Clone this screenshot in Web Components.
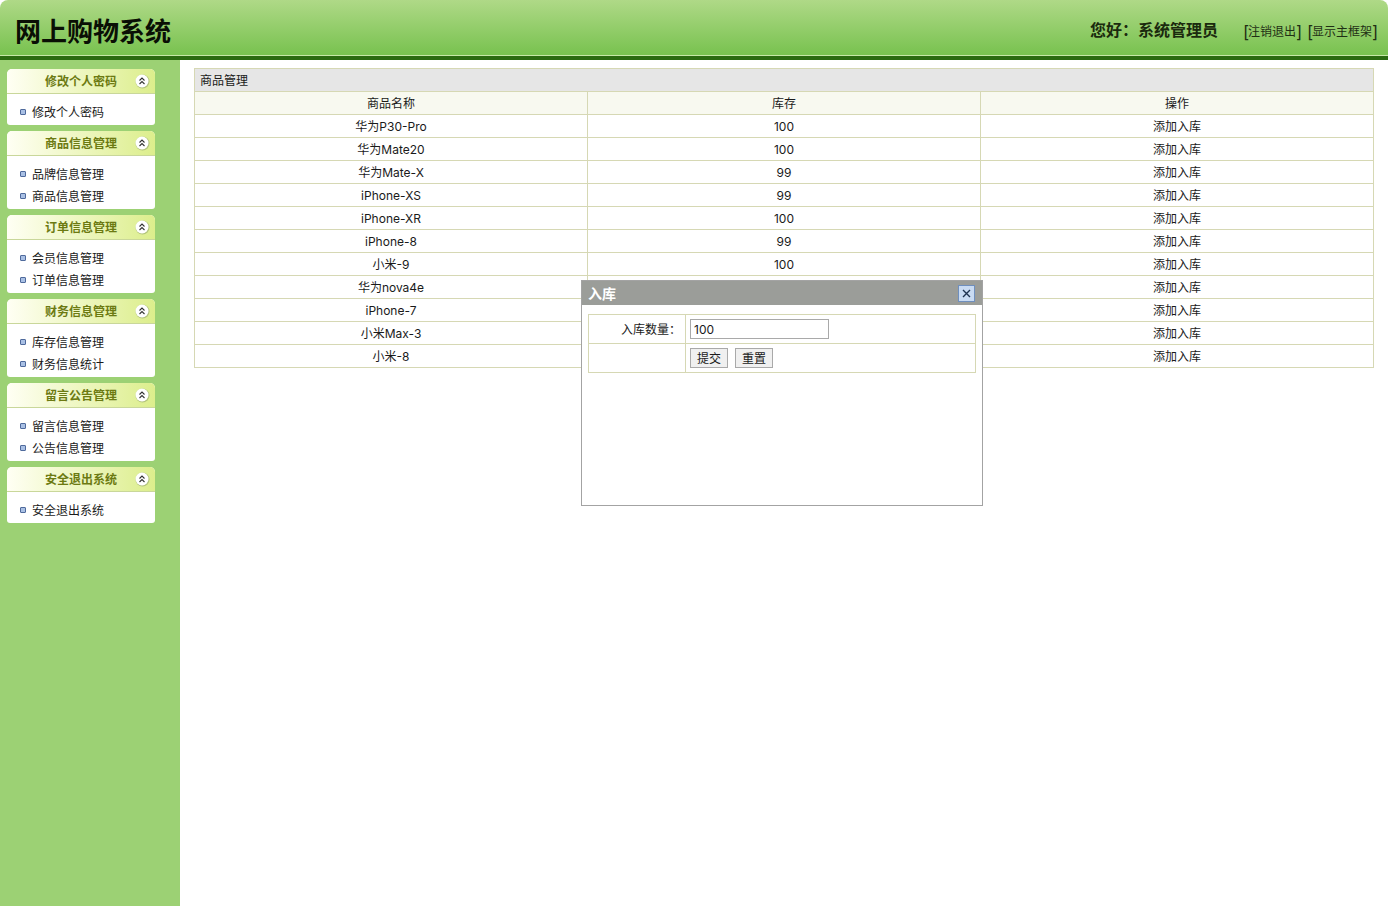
<!DOCTYPE html>
<html lang="zh">
<head>
<meta charset="utf-8">
<title>网上购物系统</title>
<style>
  html, body { margin: 0; height: 100%; }
  body {
    font: 12px/16px Inter, "Noto Sans CJK SC", sans-serif;
    color: #1a1a1a;
    background: #fff;
    overflow: hidden;
  }
  .page { display: flex; flex-direction: column; height: 906px; position: relative; }
  .main { display: flex; flex: 1; min-height: 0; }
</style>
</head>
<body>
<div class="page">
  <app-header></app-header>
  <div class="main">
    <side-bar>
      <side-panel title="修改个人密码"><side-link>修改个人密码</side-link></side-panel>
      <side-panel title="商品信息管理"><side-link>品牌信息管理</side-link><side-link>商品信息管理</side-link></side-panel>
      <side-panel title="订单信息管理"><side-link>会员信息管理</side-link><side-link>订单信息管理</side-link></side-panel>
      <side-panel title="财务信息管理"><side-link>库存信息管理</side-link><side-link>财务信息统计</side-link></side-panel>
      <side-panel title="留言公告管理"><side-link>留言信息管理</side-link><side-link>公告信息管理</side-link></side-panel>
      <side-panel title="安全退出系统"><side-link>安全退出系统</side-link></side-panel>
    </side-bar>
    <goods-table></goods-table>
  </div>
  <stock-dialog></stock-dialog>
</div>

<script>
// 顶部标题栏
class AppHeader extends HTMLElement {
  constructor() {
    super();
    this.attachShadow({ mode: 'open' });
    this.shadowRoot.innerHTML = `
      <style>
        :host {
          display: flex;
          align-items: center;
          height: 55px;
          flex: none;
          padding: 0 11px 0 15px;
          background: linear-gradient(#afd987, #78c24f);
          border-bottom: 1px solid #c5e8a6;
          border-radius: 8px 8px 0 0;
          position: relative;
        }
        :host::after {
          content: "";
          position: absolute;
          left: 0; right: 0; top: 56px;
          height: 4px;
          background: #2a6a10;
        }
        h1 { margin: 9px 0 0; font-size: 26px; line-height: 30px; font-weight: 700; color: #0a0f05; flex: 1; }
        .hello { font-size: 16px; line-height: 24px; font-weight: 700; color: #1b2a0e; margin: 4px 25px 0 0; }
        .links { display: flex; gap: 6px; margin-top: 8px; font-size: 12px; color: #1f2f14; }
        .links b { display: block; width: 5px; text-align: center; font-weight: 400; font-size: 17px; line-height: 18px; }
        .links span { display: flex; align-items: center; }
      </style>
      <h1>网上购物系统</h1>
      <div class="hello">您好：系统管理员</div>
      <div class="links">
        <span><b>[</b>注销退出<b>]</b></span>
        <span><b>[</b>显示主框架<b>]</b></span>
      </div>
    `;
  }
}

// 左侧菜单
class SideBar extends HTMLElement {
  constructor() {
    super();
    this.attachShadow({ mode: 'open' });
    this.shadowRoot.innerHTML = `
      <style>
        :host {
          display: flex;
          flex-direction: column;
          gap: 6px;
          flex: none;
          width: 180px;
          box-sizing: border-box;
          padding: 9px 25px 0 7px;
          margin-top: 4px;
          background: #9cd174;
        }
      </style>
      <slot></slot>
    `;
  }
}

class SidePanel extends HTMLElement {
  constructor() {
    super();
    this.attachShadow({ mode: 'open' });
    this.shadowRoot.innerHTML = `
      <style>
        :host { display: block; background: #fff; border-radius: 5px 5px 3px 3px; overflow: hidden; }
        .head {
          position: relative;
          height: 24px;
          line-height: 26px;
          border-bottom: 1px solid #c9d79a;
          text-align: center;
          font-weight: 700;
          font-size: 12px;
          color: #6c7a12;
          background: linear-gradient(90deg, #fffff4, #dcee8c);
        }
        svg { position: absolute; right: 5px; top: 4px; }
        .body { padding: 7px 0 2px; }
      </style>
      <div class="head">
        <span id="title"></span>
        <svg width="16" height="16" viewBox="0 0 16 16">
          <circle cx="8.5" cy="8.5" r="7" fill="#8fa36a" opacity=".55"/>
          <circle cx="8" cy="8" r="6.5" fill="#fff"/>
          <path d="M5.5 7.5 8 5l2.5 2.5M5.5 11 8 8.5l2.5 2.5" fill="none" stroke="#333" stroke-width="1.1"/>
        </svg>
      </div>
      <div class="body"><slot></slot></div>
    `;
  }
  connectedCallback() {
    this.shadowRoot.getElementById('title').textContent = this.getAttribute('title');
    this.removeAttribute('title');
  }
}

class SideLink extends HTMLElement {
  constructor() {
    super();
    this.attachShadow({ mode: 'open' });
    this.shadowRoot.innerHTML = `
      <style>
        :host {
          display: flex;
          align-items: center;
          height: 22px;
          padding-left: 13px;
          font-size: 12px;
        }
        i {
          width: 4px; height: 4px;
          margin-right: 6px;
          border: 1px solid #4f6a9c;
          border-radius: 1px;
          background: #a9c0e4;
        }
        span { padding-top: 2px; }
      </style>
      <i></i><span><slot></slot></span>
    `;
  }
}

// 商品列表
const GOODS = [
  ['华为P30-Pro', 100], ['华为Mate20', 100], ['华为Mate-X', 99], ['iPhone-XS', 99],
  ['iPhone-XR', 100], ['iPhone-8', 99], ['小米-9', 100], ['华为nova4e', 100],
  ['iPhone-7', 100], ['小米Max-3', 100], ['小米-8', 100]
];

class GoodsTable extends HTMLElement {
  constructor() {
    super();
    this.attachShadow({ mode: 'open' });
    this.shadowRoot.innerHTML = `
      <style>
        :host { display: block; flex: 1; min-width: 0; padding: 12px 14px 0; }
        table { width: 100%; border-collapse: collapse; table-layout: fixed; font-size: 12px; }
        td, th { height: 20px; padding: 2px 0 0; border: 1px solid #d6d8b4; text-align: center; font-weight: 400; }
        .title { text-align: left; padding-left: 5px; background: #e6e6e6; }
        th { background: #f8f9f0; }
      </style>
      <table>
        <tr><td class="title" colspan="3">商品管理</td></tr>
        <tr><th>商品名称</th><th>库存</th><th>操作</th></tr>
        ${GOODS.map(g => `<tr><td>${g[0]}</td><td>${g[1]}</td><td>添加入库</td></tr>`).join('')}
      </table>
    `;
  }
}

// 入库弹窗，盖在表格上面
class StockDialog extends HTMLElement {
  constructor() {
    super();
    this.attachShadow({ mode: 'open' });
    this.shadowRoot.innerHTML = `
      <style>
        :host {
          position: absolute;
          left: 581px; top: 280px;
          width: 402px; height: 226px;
          box-sizing: border-box;
          border: 1px solid #a3a3a3;
          background: #fff;
          font-size: 12px;
        }
        .bar {
          display: flex;
          align-items: center;
          justify-content: space-between;
          height: 24px;
          padding: 0 7px 0 6px;
          background: #9b9d99;
          color: #fff;
          font-weight: 700;
          font-size: 14px;
        }
        .bar > span:first-child { padding-top: 2px; }
        .close {
          width: 15px; height: 15px;
          border: 1px solid #6f8fbe;
          background: #c9dbf3;
          display: flex; align-items: center; justify-content: center;
        }
        form { padding: 9px 6px 0; }
        table { width: 100%; border-collapse: collapse; table-layout: fixed; }
        td { height: 28px; padding: 0 4px; border: 1px solid #d6d8b4; }
        td:first-child { width: 92px; height: 26px; text-align: right; padding: 2px 4px 0 0; }
        input {
          box-sizing: border-box;
          display: block;
          width: 139px; height: 20px;
          padding: 0 3px;
          border: 1px solid #a9a9a9;
          font: 12px Inter, "Noto Sans CJK SC", sans-serif;
          color: #1a1a1a;
        }
        button {
          box-sizing: border-box;
          width: 38px; height: 20px;
          padding: 2px 0 0;
          border: 1px solid #a9a9a9;
          background: #f0f0f0;
          font: 12px/16px Inter, "Noto Sans CJK SC", sans-serif;
          color: #1a1a1a;
        }
        .btns { display: flex; gap: 7px; }
      </style>
      <div class="bar">
        <span>入库</span>
        <span class="close">
          <svg width="9" height="9" viewBox="0 0 9 9"><path d="M1 1l7 7M8 1L1 8" stroke="#1f3350" stroke-width="1.4" fill="none"/></svg>
        </span>
      </div>
      <form onsubmit="return false">
        <table>
          <tr><td>入库数量：</td><td><input value="100"></td></tr>
          <tr><td></td><td><div class="btns"><button type="button">提交</button><button type="button">重置</button></div></td></tr>
        </table>
      </form>
    `;
  }
}

customElements.define('app-header', AppHeader);
customElements.define('side-bar', SideBar);
customElements.define('side-panel', SidePanel);
customElements.define('side-link', SideLink);
customElements.define('goods-table', GoodsTable);
customElements.define('stock-dialog', StockDialog);
</script>
</body>
</html>
